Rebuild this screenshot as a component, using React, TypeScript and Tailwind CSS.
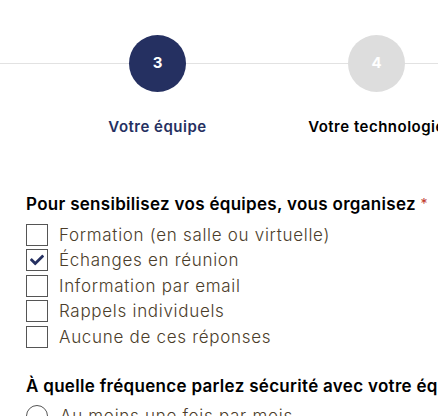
import { FaCheck } from "react-icons/fa";

const steps = [
  { n: 1, label: "Votre entreprise" },
  { n: 2, label: "Vos risques" },
  { n: 3, label: "Votre équipe", active: true },
  { n: 4, label: "Votre technologie" },
];

const options = [
  { text: "Formation (en salle ou virtuelle)", checked: false },
  { text: "Échanges en réunion", checked: true },
  { text: "Information par email", checked: false },
  { text: "Rappels individuels", checked: false },
  { text: "Aucune de ces réponses", checked: false },
];

export default function App() {
  return (
    <div
      className="w-[438px] h-[416px] overflow-hidden bg-white"
      style={{ fontFamily: "Inter, 'Noto Sans', sans-serif" }}
    >
      {/* Stepper */}
      <div className="relative pt-[35px] overflow-hidden">
        <div className="absolute left-0 right-0 top-[63px] h-px bg-[#e2e2e2]" />
        <div className="relative flex ml-[-390px]">
          {steps.map((s) => (
            <div key={s.n} className="w-[219px] shrink-0 flex flex-col items-center">
              <div
                className={`w-[57px] h-[57px] rounded-full flex items-center justify-center text-[15px] font-bold ${
                  s.active ? "bg-[#253061] text-white" : "bg-[#dddddd] text-white"
                }`}
              >
                {s.n}
              </div>
              <div
                className={`mt-[24px] text-[15px] font-semibold tracking-[0.5px] whitespace-nowrap ${
                  s.active ? "text-[#253061]" : "text-black"
                }`}
              >
                {s.label}
              </div>
            </div>
          ))}
        </div>
      </div>

      {/* Question 1 */}
      <div className="px-[26px] mt-[53px]">
        <p className="text-[17px] font-semibold tracking-[0.3px] text-black leading-6 whitespace-nowrap">
          Pour sensibilisez vos équipes, vous organisez{" "}
          <span className="text-[#c0392b] font-normal text-[14px] align-top">*</span>
        </p>
        <div className="mt-[8px] flex flex-col gap-[3.5px]">
          {options.map((o) => (
            <label key={o.text} className="flex items-center gap-[11px]">
              <span className="w-[22px] h-[22px] border border-[#555] bg-white flex items-center justify-center">
                {o.checked && <FaCheck className="w-[14px] h-[14px] text-[#253061]" />}
              </span>
              <span className="text-[17px] font-light tracking-[0.7px] text-[#4b3d2a] leading-[22px] whitespace-nowrap">
                {o.text}
              </span>
            </label>
          ))}
        </div>
      </div>

      {/* Question 2 */}
      <div className="px-[26px] mt-[26px]">
        <p className="text-[17px] font-semibold tracking-[0.3px] text-black leading-6 whitespace-nowrap">
          À quelle fréquence parlez sécurité avec votre équipe ?
        </p>
        <label className="mt-[6px] flex items-center gap-[12px]">
          <span className="w-[22px] h-[22px] rounded-full border border-[#555]" />
          <span className="text-[17px] font-light tracking-[0.7px] text-[#4b3d2a] whitespace-nowrap">
            Au moins une fois par mois
          </span>
        </label>
      </div>
    </div>
  );
}
